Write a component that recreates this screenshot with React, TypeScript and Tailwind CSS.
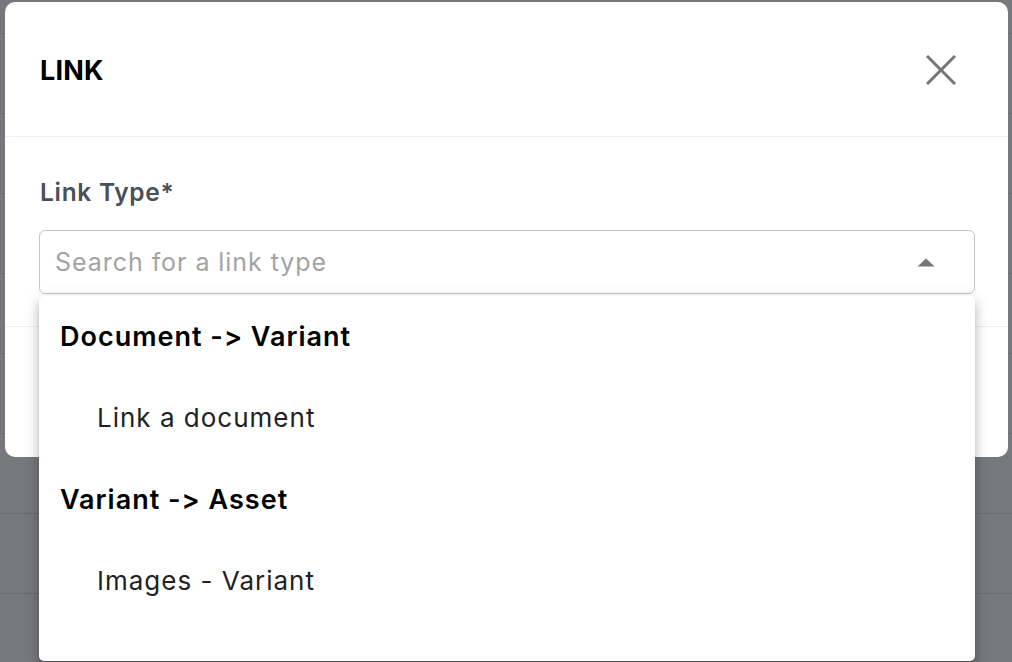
import React from 'react';

const FONT = { fontFamily: 'Inter, "Noto Sans", sans-serif' };

const CloseIcon: React.FC = () => (
    <svg width="30" height="30" viewBox="0 0 30 30" fill="none" stroke="#757575" strokeWidth="3" strokeLinecap="butt">
        <line x1="1" y1="1" x2="29" y2="29" />
        <line x1="29" y1="1" x2="1" y2="29" />
    </svg>
);

const ArrowUp: React.FC = () => (
    <svg width="18" height="9" viewBox="0 0 18 9" fill="#757575">
        <path d="M0.5 8.5 9 0.5 17.5 8.5z" />
    </svg>
);

const groups = [
    { label: 'Document -> Variant', options: ['Link a document'] },
    { label: 'Variant -> Asset', options: ['Images - Variant'] },
];

const App: React.FC = () => {
    return (
        <div className="relative w-[1012px] h-[662px] overflow-hidden bg-[#77787b] [font-feature-settings:'calt'_0]" style={FONT}>
            {/* table rows behind the backdrop */}
            <div className="flex flex-col pt-[33px]">
                {Array.from({ length: 8 }).map((_, i) => (
                    <div key={i} className="h-[80px] border-t border-[#6b6c70]" />
                ))}
            </div>

            <div className="absolute left-[5px] top-[2px] w-[1003px] h-[455px] rounded-[10px] bg-white flex flex-col">
                <div className="h-[135px] shrink-0 flex items-center justify-between pl-[35px] pr-[52px] pt-[2px] border-b border-[#efeff4]">
                    <h2 className="text-[27px] leading-none font-bold text-black tracking-[0.2px]">LINK</h2>
                    <button className="flex items-center justify-center">
                        <CloseIcon />
                    </button>
                </div>

                <div className="pl-[34px] pr-[33px] pt-[42px] pb-[32px] border-b border-[#efeff4]">
                    <label className="block text-[24.5px] leading-[26px] font-semibold text-[#4b5058] pl-[1px] tracking-[0.7px]">Link Type*</label>
                    <div className="relative mt-[25px]">
                        <div className="h-[64px] rounded-[6px] border border-[#c4c4c4] flex items-center justify-between pl-[15px] pr-[39px]">
                            <span className="text-[25px] leading-none text-[#a3a3a3] tracking-[0.95px]">Search for a link type</span>
                            <ArrowUp />
                        </div>

                        <div className="absolute left-0 right-0 top-full mt-[2px] h-[365px] rounded-[5px] bg-white shadow-[0_5px_5px_-3px_rgba(0,0,0,0.2),0_8px_10px_1px_rgba(0,0,0,0.14),0_3px_14px_2px_rgba(0,0,0,0.12)]">
                            {groups.map((group) => (
                                <div key={group.label}>
                                    <div className="h-[81.5px] flex items-center pl-[21px] text-[27px] leading-none font-semibold text-black tracking-[1px]">
                                        {group.label}
                                    </div>
                                    {group.options.map((option) => (
                                        <div key={option} className="h-[81.5px] flex items-center pl-[58px] text-[26px] leading-none text-[#222222] tracking-[1px]">
                                            {option}
                                        </div>
                                    ))}
                                </div>
                            ))}
                        </div>
                    </div>
                </div>

                <div className="flex-1" />
            </div>
        </div>
    );
};

export default App;
